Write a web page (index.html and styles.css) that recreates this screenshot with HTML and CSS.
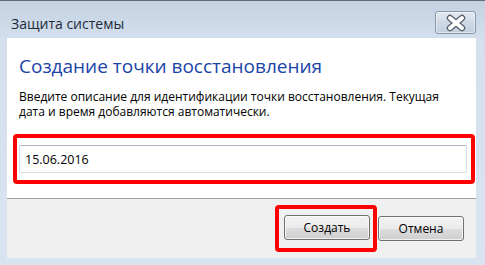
FILE: index.html
```html
<!DOCTYPE html>
<html lang="ru">
<head>
  <meta charset="UTF-8" />
  <title>Защита системы</title>
  <link rel="stylesheet" href="styles.css">
</head>
<body>
  <div class="window">
    <div class="titlebar">
      <span class="title">Защита системы</span>
      <button class="btn-close" aria-label="Закрыть">
        <svg width="22" height="18" viewBox="0 0 22 18">
          <path d="M5 4 L17 14 M17 4 L5 14" stroke="#59606c" stroke-width="6.5" stroke-linecap="round" />
          <path d="M5 4 L17 14 M17 4 L5 14" stroke="#ffffff" stroke-width="4" stroke-linecap="round" />
        </svg>
      </button>
    </div>

    <div class="client">
      <div class="content">
        <h1>Создание точки восстановления</h1>
        <p>Введите описание для идентификации точки восстановления. Текущая дата и время добавляются автоматически.</p>
        <div class="mark mark-input">
          <input type="text" class="field" value="15.06.2016" />
        </div>
      </div>
      <div class="footer">
        <div class="mark mark-button">
          <button class="btn">Создать</button>
        </div>
        <button class="btn">Отмена</button>
      </div>
    </div>
  </div>
</body>
</html>
```

FILE: styles.css
```css
*, *::before, *::after {
  box-sizing: border-box;
}
body {
  margin: 0;
  font-family: 'Open Sans', 'Noto Sans', sans-serif;
  font-size: 12px;
  color: #000;
}
.window {
  width: 485px;
  height: 265px;
  border-top: 1px solid #5d6b7c;
  background: linear-gradient(#c3d1e1, #d4e0ed 40px, #d9e4f1);
  display: flex;
  flex-direction: column;
}
.titlebar {
  height: 37px;
  display: flex;
  justify-content: space-between;
  align-items: flex-start;
  padding: 0 9px 0 11px;
}
.title {
  margin-top: 13px;
  font-size: 14px;
  line-height: 20px;
  color: #1e2b3c;
}
.btn-close {
  margin-top: 10px;
  width: 41px;
  height: 23px;
  padding: 0;
  border: 1px solid #8796ab;
  border-radius: 3px;
  background: linear-gradient(#e3e9f1, #cfd9e6 50%, #c3cfde);
  box-shadow: inset 0 0 0 1px rgba(255,255,255,0.5);
  display: flex;
  align-items: center;
  justify-content: center;
}
.client {
  flex: 1;
  margin: 0 9px 7px 7px;
  display: flex;
  flex-direction: column;
}
.content {
  flex: 1;
  background: #fff;
  padding: 14px 1px 0 6px;
}
h1 {
  margin: 0 0 0 6px;
  font-weight: normal;
  font-size: 19px;
  line-height: 28px;
  color: #1a44a8;
}
.content p {
  max-width: 440px;
  margin: 9px 0 0 6px;
  line-height: 15px;
}
.mark {
  border: 4px solid #ff0000;
  border-radius: 4px;
}
.mark-input {
  margin-top: 15px;
  padding: 7px 4px 7px 2px;
}
.field {
  display: block;
  width: 100%;
  height: 28px;
  border: 1px solid #d5dbe3;
  border-top-color: #aeb5c0;
  border-radius: 2px;
  padding: 0 5px;
  font-family: inherit;
  font-size: 12.5px;
  color: #000;
  background: #fff;
}
.footer {
  height: 60px;
  border-top: 1px solid #a0a0a0;
  background: #f0f0f0;
  display: flex;
  justify-content: flex-end;
  align-items: center;
  padding-right: 12px;
}
.mark-button {
  padding: 6px 3px 8px 5px;
  margin-right: 1px;
}
.btn {
  width: 86px;
  height: 25px;
  padding: 0;
  border: 1px solid #707070;
  border-radius: 3px;
  background: linear-gradient(#f2f2f2, #ebebeb 50%, #dddddd 50%, #cfcfcf);
  box-shadow: inset 0 0 0 1px rgba(255,255,255,0.7);
  font-family: inherit;
  font-size: 12px;
  color: #000;
}
```
